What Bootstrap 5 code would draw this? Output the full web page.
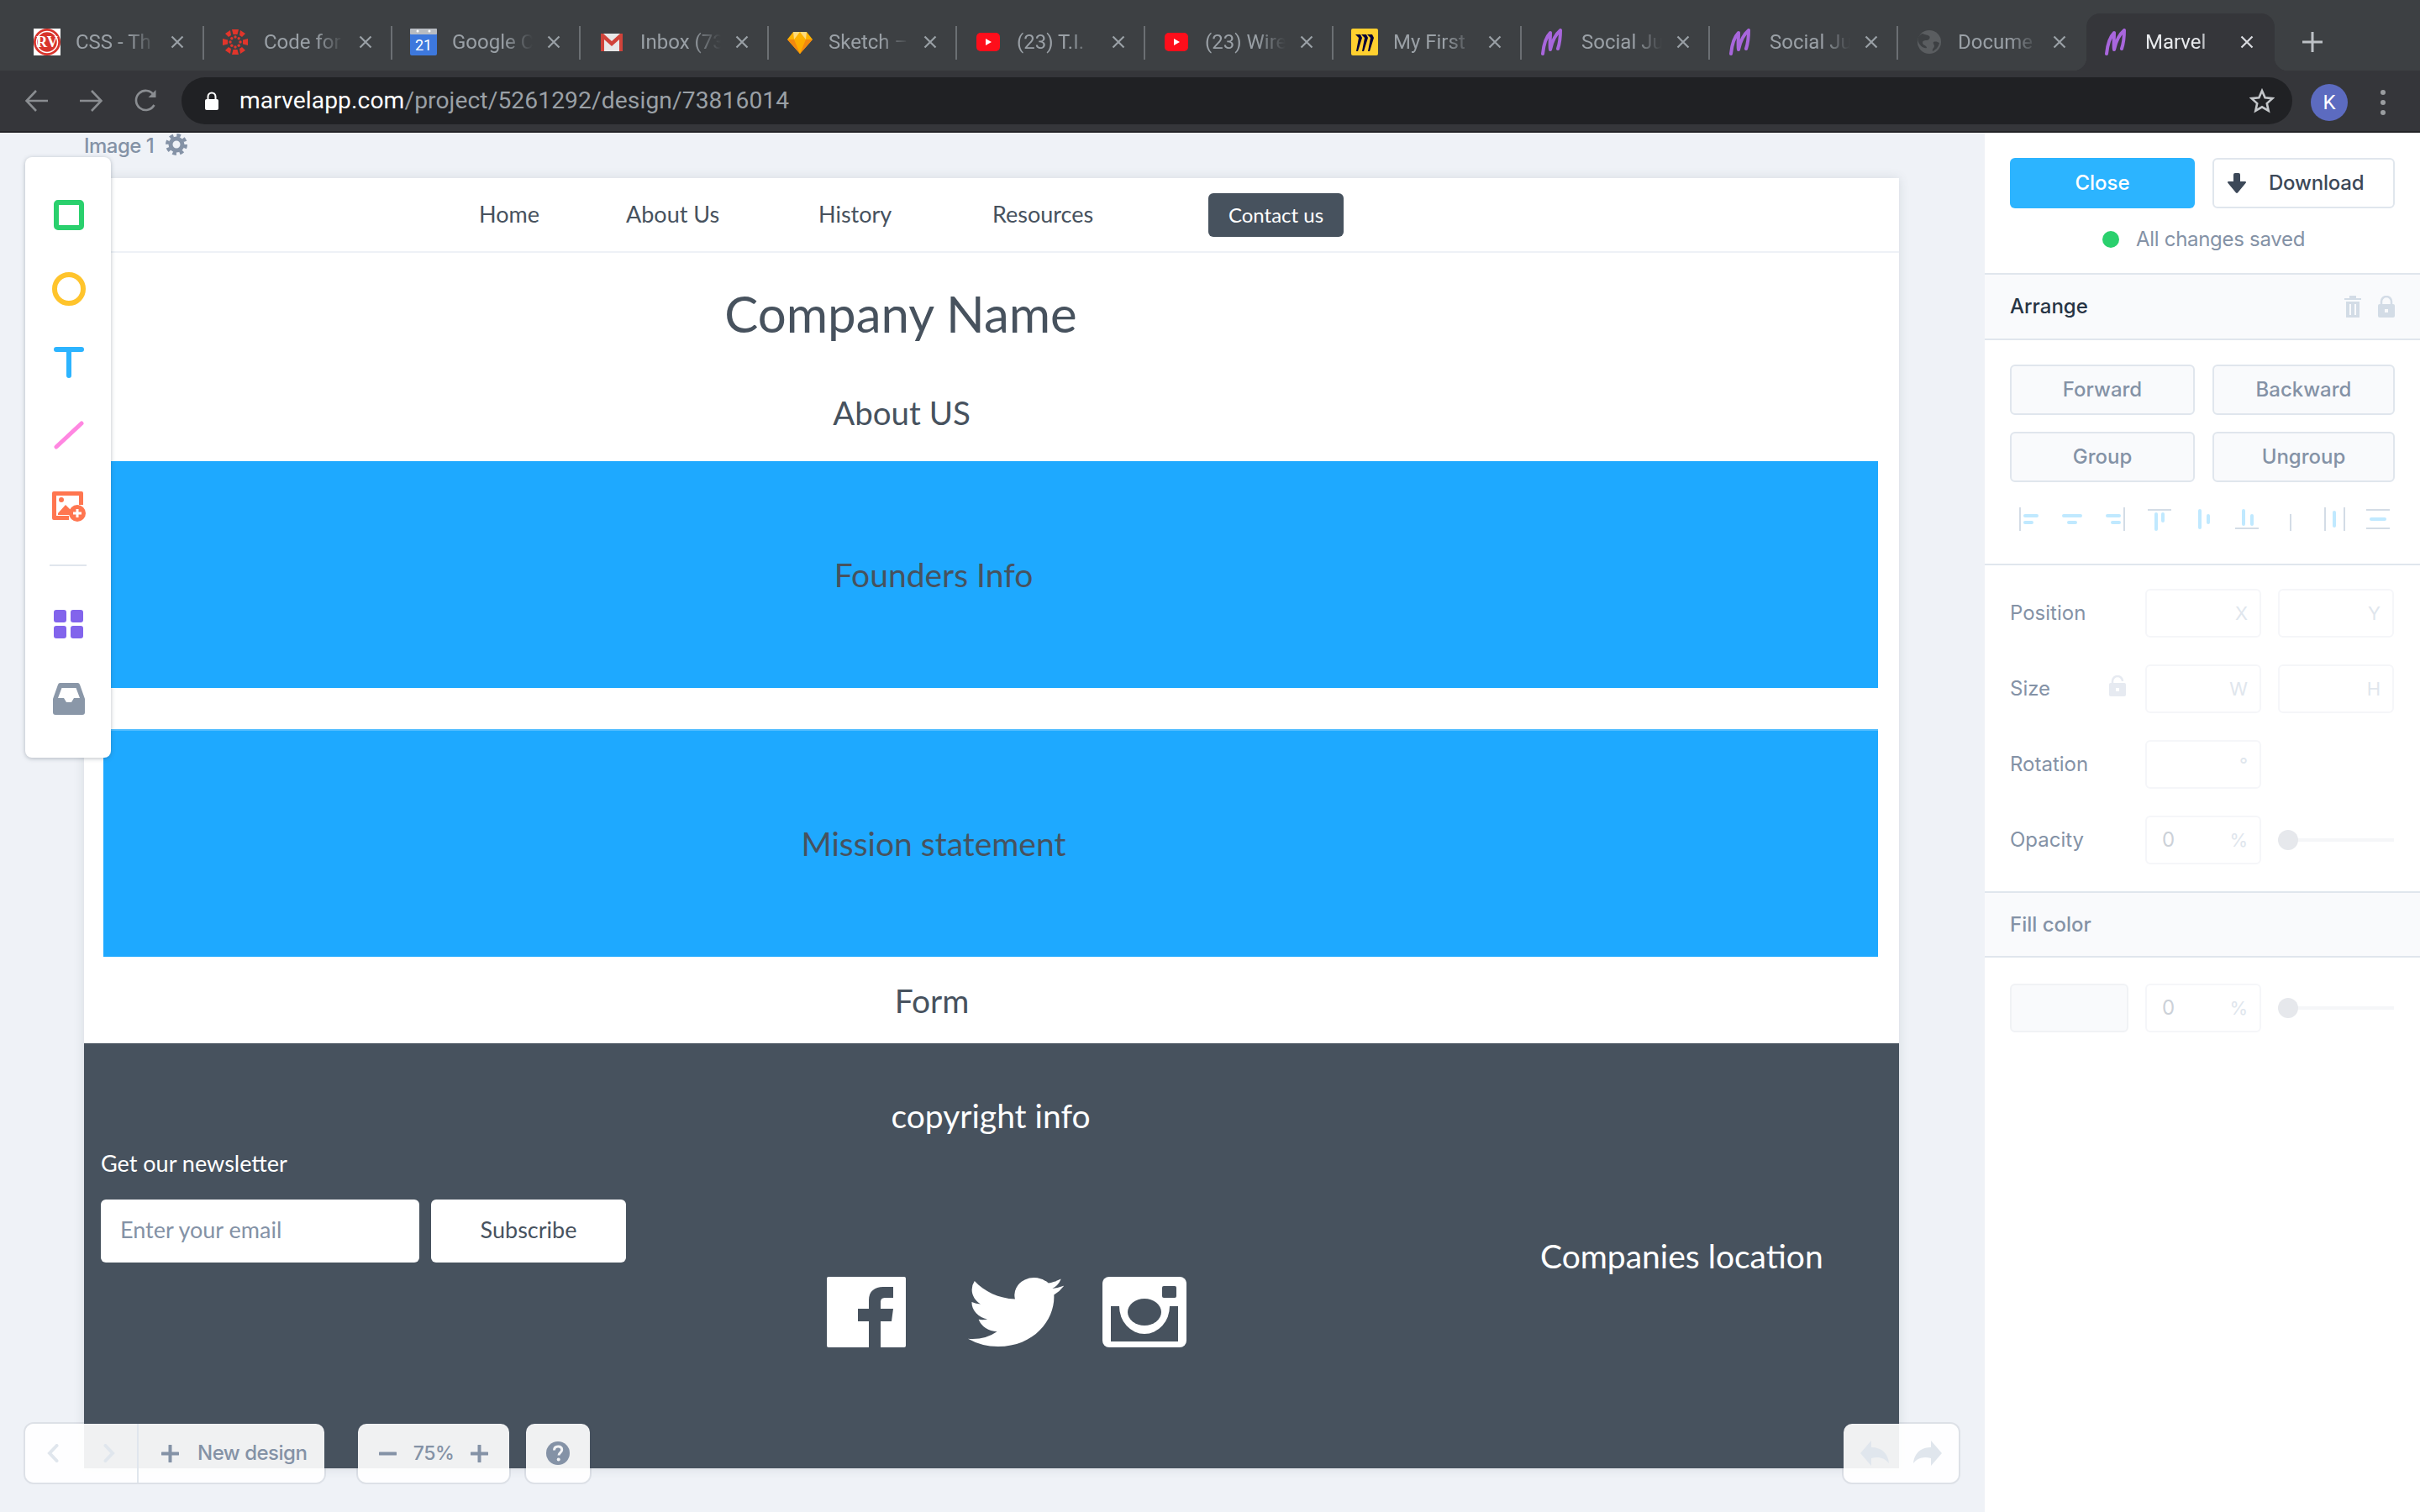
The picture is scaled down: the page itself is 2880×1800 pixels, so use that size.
<!DOCTYPE html>
<html lang="en">
<head>
<meta charset="utf-8">
<title>Marvel</title>
<link rel="stylesheet" href="https://cdn.jsdelivr.net/npm/bootstrap@5.3.0/dist/css/bootstrap.min.css">
<style>
html,body{height:1800px;width:2880px;overflow:hidden}
body{background:#eff2f7;font-family:"Inter","Liberation Sans",sans-serif;color:#47525e}
svg{display:block;flex:none}
/* browser chrome */
.tabstrip{height:84px;background:#3d4043;padding-left:20px;font-family:"Roboto","Liberation Sans",sans-serif}
.tabitem{width:224px;height:68px;position:relative;color:#9aa0a6;font-size:24px}
.tabitem.sep::after{content:"";position:absolute;right:1px;top:15px;height:40px;width:2px;background:#6b6f73}
.tabitem.on{background:#35363a;border-radius:16px 16px 0 0;color:#e8eaed;margin-left:-1px}
.tabitem.on::before,.tabitem.on .flareright{content:"";position:absolute;bottom:0;width:16px;height:16px}
.tabitem.on::before{left:-16px;background:radial-gradient(circle at 0 0,transparent 16px,#35363a 16.5px)}
.tabitem.on .flareright{right:-16px;background:radial-gradient(circle at 100% 0,transparent 16px,#35363a 16.5px)}
.favslot{width:70px;padding-left:20px}
.tabname{width:100px;overflow:hidden;white-space:nowrap;line-height:32px;-webkit-mask-image:linear-gradient(90deg,#000 62%,transparent 96%);mask-image:linear-gradient(90deg,#000 62%,transparent 96%)}
.tabshut{margin-left:13px}
.newtab{margin-left:33px;height:68px}
.toolstrip{height:74px;background:#35363a;border-bottom:2px solid #232427;padding-top:8px;position:relative}
.navglyphs{width:216px;height:56px;padding-left:30px;gap:38px}
.addressbar{width:2512px;height:56px;background:#202124;border-radius:28px;padding:0 21px 0 28px;font-family:"Roboto","Liberation Sans",sans-serif;font-size:28.2px}
.urlhost{color:#fff}.urlpath{color:#9aa0a6}
.urltext{margin-left:25px;line-height:56px;letter-spacing:.1px}
.useravatar{width:44px;height:44px;border-radius:50%;background:#5c6bc0;color:#fff;font:24px "Roboto",sans-serif;margin-left:22px}
.moredots{margin-left:38px}
/* app */
.appmain{height:1642px}
.workspace{position:relative;width:2362px;flex:none;overflow:hidden}
.imgcaption{height:54px;padding-left:100px;gap:14px;color:#8492a6;font-size:24px;font-weight:500;line-height:30px;letter-spacing:-.5px;padding-top:1px}
.artboard{margin-left:100px;width:2160px;height:1536px;background:#fff;box-shadow:0 0 12px rgba(71,82,94,.14);font-family:"Lato","Liberation Sans",sans-serif;color:#47525e}
.sitenav{height:89px;border-bottom:2px solid #eef1f7;padding-left:470px;display:grid;grid-template-columns:175px 229px 207px 257px 161px;align-items:center;font-size:27px}
.sitelink{color:#47525e;text-decoration:none}
.contactbtn{width:161px;height:52px;background:#47525e;color:#fff;border-radius:6px;font-size:24px;padding:0;border:0;display:flex;align-items:center;justify-content:center}
.heroblock{height:248px;padding-top:34px}
.sitetitle{font-size:60px;font-weight:400;width:1944px;text-align:center;margin:0;line-height:76px}
.aboutline{font-size:38.5px;font-weight:400;width:1946px;text-align:center;margin:56px 0 0;line-height:48px}
.bluepanel{margin-left:23px;width:2112px;height:270px;background:#1ea9ff;font-size:39px;padding-right:136px;color:#47525e}
.bluepanel.second{margin-top:49px;height:271px;border-top:2px solid #52bdff}
.formline{font-size:39px;font-weight:400;width:2018px;text-align:center;height:103px;line-height:104px;margin:0}
.sitefoot{height:506px;background:#47525e;color:#fff;position:relative}
.newsblock{width:645px;padding:121px 0 0 20px}
.newsblock p{font-size:27px;line-height:44px;margin:0 0 21px}
.newsrow{gap:14px}
.emailfield{width:379px;height:75px;border:0;border-radius:6px;font-size:27px;padding:0 23px 4px;font-family:inherit}
.emailfield::placeholder{color:#8492a6;opacity:1}
.subbtn{width:232px;height:75px;background:#fff;border:0;border-radius:6px;font-size:27px;color:#47525e;padding:0 0 3px}
.midblock{width:580px}
.copyline{font-size:39px;text-align:center;line-height:48px;margin:62px 0 0 89px;width:690px}
.sociallist{margin-top:168px;margin-left:239px}
.twbird{margin-left:74px}
.igglyph{margin-left:46px}
.placeblock{font-size:39px;margin:228px 0 0 508px;line-height:50px;white-space:nowrap}
/* floating */
.toolpalette{position:absolute;left:30px;top:29px;width:102px;height:715px;background:#fff;border-radius:8px;box-shadow:0 1px 5px rgba(60,72,88,.35);padding-top:51px}
.palslot{width:102px;display:flex;justify-content:center;padding-left:2px}
.mb-rect{margin-bottom:50px}
.mb-circle{margin-bottom:49px}
.mb-text{margin-bottom:51px}
.mb-line{margin-bottom:50px}
.mb-img{margin-bottom:51px}
.mb-grid{margin-top:52px;margin-bottom:53px}
.paldivider{width:44px;height:2px;background:#e0e6ed;margin:0 auto}
.floatgroup{height:70px;background:rgba(255,255,255,.92);border-radius:10px;box-shadow:0 0 0 2px rgba(71,82,94,.1);color:#8492a6;font-size:24px;font-weight:500;letter-spacing:-.5px}
.bottombar{position:absolute;left:30px;bottom:35px;gap:20px}
.undogroup{position:absolute;right:31px;bottom:35px;width:137px;padding:0 20px;justify-content:space-between}
.backfwd{width:135px;height:70px;border-right:2px solid #e0e6ed;padding:0 26px}
.newdesign{width:221px;padding-left:27px;gap:22px}
.zoomgroup{width:180px;margin-left:20px;padding:0 25px;justify-content:space-between;font-size:23px}
.helpgroup{width:76px;justify-content:center}
/* side panel */
.sidepanel{width:518px;background:#fff;flex:none;font-size:24px;color:#8492a6}
.panelinner{padding:30px 30px 0}
.btnpair{display:grid;grid-template-columns:220px 217px;gap:20px 21px}
.closebtn,.dlbtn,.softbtn{height:60px;border-radius:6px;font-size:24px;font-weight:500;padding:0;display:flex;align-items:center;justify-content:center;font-family:inherit}
.closebtn{background:#2cb4ff;color:#fff;border:0}
.dlbtn{background:#fff;border:2px solid #e0e6ed;color:#3c4858;justify-content:flex-start;padding-left:16px;gap:27px;letter-spacing:-.2px}
.softbtn{background:#f9fafc;border:2px solid #e0e6ed;color:#8492a6}
.savedline{height:77px;gap:20px;padding:0 0 4px 110px;letter-spacing:-.3px;white-space:nowrap}
.greendot{width:20px;height:20px;border-radius:50%;background:#2ad06d}
.panelhead{height:80px;background:#f9fafc;border-top:2px solid #e0e6ed;border-bottom:2px solid #e0e6ed;padding:0 30px;font-weight:500;color:#273444;justify-content:space-between}
.panelhead.dim{color:#8492a6;height:79px}
.headicons{gap:20px}
.arrangebody{height:266px;padding:29px 30px 0}
.alignrow{gap:24px;margin:30px 0 0 8px}
.propsbody{height:390px;padding:28px 30px 0;border-top:2px solid #e0e6ed}
.proprow{height:58px;margin-bottom:32px;gap:20px}
.proplabel{width:141px;flex:none;display:flex;justify-content:space-between;align-items:center;padding-right:3px}
.lockglyph{margin-bottom:8px}
.propbox{width:138px;height:58px;border:2px solid #f5f6f9;border-radius:6px;display:flex;align-items:center;justify-content:space-between;padding:0 14px 0 18px;color:#e0e6ed;font-size:22px;flex:none}
.propbox .zeroval{color:#ccd1d8;font-size:24px}
.propbox .unitend{margin-left:auto}
.slidertrack{width:138px;height:4px;background:#f5f6f8;position:relative;flex:none}
.sliderthumb{position:absolute;left:0;top:-10px;width:24px;height:24px;border-radius:50%;background:#e6e8ec}
.swatchbox{width:141px;height:58px;flex:none;background:#f9fafc;border:2px solid #f0f2f5;border-radius:6px}
.fillbody{padding:31px 30px 0}
</style>
</head>
<body>
<header>
  <div class="tabstrip d-flex align-items-end">
    <div class="tabitem sep d-flex align-items-center"><div class="favslot"><svg width="32" height="32" viewBox="0 0 32 32"><rect width="32" height="32" fill="#fff"/><circle cx="16" cy="16" r="16" fill="#d8342c"/><circle cx="16" cy="16" r="12.5" fill="none" stroke="#fff" stroke-width="1.5"/><text x="16" y="22" text-anchor="middle" font-family="Liberation Serif" font-weight="700" font-size="18" fill="#fff">RV</text></svg></div><div class="tabname">CSS - Th</div><svg class="tabshut" width="16" height="16" viewBox="0 0 16 16"><path d="M1.5 1.5l13 13M14.500 1.500l-13 13" stroke="#9aa0a6" stroke-width="2.200"/></svg></div>
    <div class="tabitem sep d-flex align-items-center"><div class="favslot"><svg width="32" height="32" viewBox="0 0 32 32" fill="#e1352b"><path d="M12 1h8l-1.500 6h-5zM12 31h8l-1.500-6h-5zM1 12v8l6-1.500v-5zM31 12v8l-6-1.500v-5zM4 6l6-4 1 6-3 2zM28 6l-6-4-1 6 3 2zM4 26l6 4 1-6-3-2zM28 26l-6 4-1-6 3-2z"/><circle cx="16" cy="10" r="1.700"/><circle cx="16" cy="22" r="1.700"/><circle cx="10" cy="16" r="1.700"/><circle cx="22" cy="16" r="1.700"/><circle cx="11.800" cy="11.800" r="1.700"/><circle cx="20.200" cy="11.800" r="1.700"/><circle cx="11.800" cy="20.200" r="1.700"/><circle cx="20.200" cy="20.200" r="1.700"/></svg></div><div class="tabname">Code for</div><svg class="tabshut" width="16" height="16" viewBox="0 0 16 16"><path d="M1.5 1.5l13 13M14.500 1.500l-13 13" stroke="#9aa0a6" stroke-width="2.200"/></svg></div>
    <div class="tabitem sep d-flex align-items-center"><div class="favslot"><svg width="32" height="32" viewBox="0 0 32 32"><rect width="32" height="32" rx="2" fill="#3d78dd"/><rect width="32" height="7" rx="1" fill="#b8bcc2"/><circle cx="9" cy="3" r="1.500" fill="#fff"/><circle cx="23" cy="3" r="1.500" fill="#fff"/><text x="16" y="26" text-anchor="middle" font-family="Roboto" font-size="18" fill="#fff">21</text></svg></div><div class="tabname">Google C</div><svg class="tabshut" width="16" height="16" viewBox="0 0 16 16"><path d="M1.5 1.5l13 13M14.500 1.500l-13 13" stroke="#9aa0a6" stroke-width="2.200"/></svg></div>
    <div class="tabitem sep d-flex align-items-center"><div class="favslot"><svg width="32" height="32" viewBox="0 0 32 32"><rect x="3" y="6" width="26" height="21" fill="#e8e8e8"/><path d="M3 27V6h3l10 9 10-9h3v21h-4V13l-9 8-9-8v14z" fill="#d0433a"/></svg></div><div class="tabname">Inbox (73</div><svg class="tabshut" width="16" height="16" viewBox="0 0 16 16"><path d="M1.5 1.5l13 13M14.500 1.500l-13 13" stroke="#9aa0a6" stroke-width="2.200"/></svg></div>
    <div class="tabitem sep d-flex align-items-center"><div class="favslot"><svg width="32" height="32" viewBox="0 0 32 32"><path d="M8 4h16l7 9-15 17L1 13z" fill="#fdb300"/><path d="M1 13h30L16 30z" fill="#f2880f"/><path d="M9 13h14l-7 17z" fill="#fdad00"/><path d="M8 4l8 0-7 9zM24 4h-8l7 9z" fill="#fedb7b"/></svg></div><div class="tabname">Sketch –</div><svg class="tabshut" width="16" height="16" viewBox="0 0 16 16"><path d="M1.5 1.5l13 13M14.500 1.500l-13 13" stroke="#9aa0a6" stroke-width="2.200"/></svg></div>
    <div class="tabitem sep d-flex align-items-center"><div class="favslot"><svg width="32" height="32" viewBox="0 0 32 32"><rect x="2" y="5" width="28" height="22" rx="5" fill="#fe0e1b"/><path d="M13 12l7 4-7 4z" fill="#fff"/></svg></div><div class="tabname">(23) T.I.</div><svg class="tabshut" width="16" height="16" viewBox="0 0 16 16"><path d="M1.5 1.5l13 13M14.500 1.500l-13 13" stroke="#9aa0a6" stroke-width="2.200"/></svg></div>
    <div class="tabitem sep d-flex align-items-center"><div class="favslot"><svg width="32" height="32" viewBox="0 0 32 32"><rect x="2" y="5" width="28" height="22" rx="5" fill="#fe0e1b"/><path d="M13 12l7 4-7 4z" fill="#fff"/></svg></div><div class="tabname">(23) Wire</div><svg class="tabshut" width="16" height="16" viewBox="0 0 16 16"><path d="M1.5 1.5l13 13M14.500 1.500l-13 13" stroke="#9aa0a6" stroke-width="2.200"/></svg></div>
    <div class="tabitem sep d-flex align-items-center"><div class="favslot"><svg width="32" height="32" viewBox="0 0 32 32"><rect width="32" height="32" rx="2" fill="#ffd02f"/><path d="M5 7h6l2 4-5 16h-2l3-16zM12 7h6l2 4-5 16h-2l3-16zM19 7h6l2 4-5 16h-2l3-16z" fill="#050038"/></svg></div><div class="tabname">My First</div><svg class="tabshut" width="16" height="16" viewBox="0 0 16 16"><path d="M1.5 1.5l13 13M14.500 1.500l-13 13" stroke="#9aa0a6" stroke-width="2.200"/></svg></div>
    <div class="tabitem sep d-flex align-items-center"><div class="favslot"><svg width="32" height="32" viewBox="0 0 32 32" fill="none"><path d="M4 30C5 20 8 10 13 5c0 7-1 15 0 20C15 16 19 7 25 2c0 8-1 16-3 22" stroke="#a866dc" stroke-width="4" stroke-linecap="round" stroke-linejoin="round"/></svg></div><div class="tabname">Social Ju</div><svg class="tabshut" width="16" height="16" viewBox="0 0 16 16"><path d="M1.5 1.5l13 13M14.500 1.500l-13 13" stroke="#9aa0a6" stroke-width="2.200"/></svg></div>
    <div class="tabitem sep d-flex align-items-center"><div class="favslot"><svg width="32" height="32" viewBox="0 0 32 32" fill="none"><path d="M4 30C5 20 8 10 13 5c0 7-1 15 0 20C15 16 19 7 25 2c0 8-1 16-3 22" stroke="#a866dc" stroke-width="4" stroke-linecap="round" stroke-linejoin="round"/></svg></div><div class="tabname">Social Ju</div><svg class="tabshut" width="16" height="16" viewBox="0 0 16 16"><path d="M1.5 1.5l13 13M14.500 1.500l-13 13" stroke="#9aa0a6" stroke-width="2.200"/></svg></div>
    <div class="tabitem d-flex align-items-center"><div class="favslot"><svg width="32" height="32" viewBox="0 0 32 32"><circle cx="16" cy="16" r="14" fill="#5a5d60"/><path d="M8 6c3 2 6 1 8 3s-1 5-3 5-5 0-5 3 5 3 5 6c-3 1-8-2-10-7s1-8 5-10zM21 16c3-1 5 0 7 1-1 5-4 8-8 10-1-3 2-4 2-6s-2-3-1-5z" fill="#3d4043"/></svg></div><div class="tabname">Docume</div><svg class="tabshut" width="16" height="16" viewBox="0 0 16 16"><path d="M1.5 1.5l13 13M14.500 1.500l-13 13" stroke="#9aa0a6" stroke-width="2.200"/></svg></div>
    <div class="tabitem on d-flex align-items-center"><div class="favslot"><svg width="32" height="32" viewBox="0 0 32 32" fill="none"><path d="M4 30C5 20 8 10 13 5c0 7-1 15 0 20C15 16 19 7 25 2c0 8-1 16-3 22" stroke="#a866dc" stroke-width="4" stroke-linecap="round" stroke-linejoin="round"/></svg></div><div class="tabname">Marvel</div><svg class="tabshut" width="16" height="16" viewBox="0 0 16 16"><path d="M1.5 1.5l13 13M14.500 1.500l-13 13" stroke="#dadce0" stroke-width="2.200"/></svg><span class="flareright"></span></div>
    <div class="newtab d-flex align-items-center"><svg width="24" height="24" viewBox="0 0 24 24"><path d="M12 0v24M0 12h24" stroke="#bdc1c6" stroke-width="3"/></svg></div>
  </div>
  <div class="toolstrip d-flex">
    <div class="navglyphs d-flex align-items-center">
      <svg width="27" height="26" viewBox="0 0 27 26" fill="none"><path d="M27 13H2M13 1L1.500 13 13 25" stroke="#8a8d91" stroke-width="2.600"/></svg>
      <svg width="27" height="26" viewBox="0 0 27 26" fill="none"><path d="M0 13h25M14 1l11.500 12L14 25" stroke="#8a8d91" stroke-width="2.600"/></svg>
      <svg width="28" height="28" viewBox="0 0 28 28" fill="none"><path d="M23.500 19A11.500 11.500 0 1 1 23 7" stroke="#8a8d91" stroke-width="2.600"/><path d="M25.500 1v9h-9z" fill="#8a8d91"/></svg>
    </div>
    <div class="addressbar d-flex align-items-center">
      <svg width="16" height="22" viewBox="0 0 16 22" fill="none"><rect y="9" width="16" height="13" rx="2" fill="#fff"/><path d="M3.500 10V6a4.500 4.500 0 0 1 9 0v4" stroke="#fff" stroke-width="2"/></svg>
      <div class="urltext"><span class="urlhost">marvelapp.com</span><span class="urlpath">/project/5261292/design/73816014</span></div>
      <svg class="ms-auto" width="30" height="30" viewBox="0 0 30 30" fill="none"><path d="M15 3l3.600 8.200 8.900.9-6.700 6 1.900 8.800L15 22.300 7.300 26.900l1.900-8.800-6.700-6 8.900-.9z" stroke="#c4c7ca" stroke-width="2.600"/></svg>
    </div>
    <div class="useravatar d-flex align-items-center justify-content-center align-self-center mb-1">K</div>
    <svg class="moredots align-self-center mb-1" width="8" height="32" viewBox="0 0 8 32" fill="#9a9da0"><circle cx="4" cy="4" r="3"/><circle cx="4" cy="16" r="3"/><circle cx="4" cy="28" r="3"/></svg>
  </div>
</header>
<main class="appmain d-flex">
  <section class="workspace">
    <div class="imgcaption d-flex align-items-start">
      <span>Image 1</span>
      <svg width="26" height="26" viewBox="0 0 26 26" fill="none"><circle cx="13" cy="13" r="7" stroke="#8492a6" stroke-width="5"/><circle cx="13" cy="13" r="11" stroke="#8492a6" stroke-width="4" stroke-dasharray="4.600 4.040"/></svg>
    </div>
    <article class="artboard">
      <nav class="sitenav">
        <a class="sitelink" href="#">Home</a>
        <a class="sitelink" href="#">About Us</a>
        <a class="sitelink" href="#">History</a>
        <a class="sitelink" href="#">Resources</a>
        <button class="contactbtn btn" type="button">Contact us</button>
      </nav>
      <div class="heroblock">
        <h1 class="sitetitle">Company Name</h1>
        <h2 class="aboutline">About US</h2>
      </div>
      <div class="bluepanel d-flex align-items-center justify-content-center">Founders Info</div>
      <div class="bluepanel second d-flex align-items-center justify-content-center">Mission statement</div>
      <h2 class="formline">Form</h2>
      <footer class="sitefoot d-flex">
        <div class="newsblock">
          <p>Get our newsletter</p>
          <div class="newsrow d-flex">
            <input class="emailfield form-control" type="text" placeholder="Enter your email">
            <button class="subbtn btn" type="button">Subscribe</button>
          </div>
        </div>
        <div class="midblock">
          <p class="copyline">copyright info</p>
          <div class="sociallist d-flex">
            <svg width="94" height="84" viewBox="0 0 94 84"><rect width="94" height="84" rx="2" fill="#fff"/><path d="M50 84V53H37V38h13V28c0-11 7-16 17-16h12v13h-9c-5 0-6 2-6 6v7h15l-2 15H64v31z" fill="#47525e"/></svg>
            <svg class="twbird" width="114" height="84" viewBox="0 2 24 20" preserveAspectRatio="none"><path fill="#fff" d="M23.953 4.570a10 10 0 0 1-2.825.775 4.958 4.958 0 0 0 2.163-2.723c-.951.555-2.005.959-3.127 1.184a4.920 4.920 0 0 0-8.384 4.482C7.690 8.095 4.067 6.130 1.640 3.162a4.822 4.822 0 0 0-.666 2.475c0 1.710.870 3.213 2.188 4.096a4.904 4.904 0 0 1-2.228-.616v.060a4.923 4.923 0 0 0 3.946 4.827 4.996 4.996 0 0 1-2.212.085 4.936 4.936 0 0 0 4.604 3.417 9.867 9.867 0 0 1-6.102 2.105c-.390 0-.779-.023-1.170-.067a13.995 13.995 0 0 0 7.557 2.209c9.053 0 13.998-7.496 13.998-13.985 0-.210 0-.420-.015-.630A9.935 9.935 0 0 0 24 4.590z"/></svg>
            <svg class="igglyph" width="100" height="84" viewBox="0 0 100 84"><rect width="100" height="84" rx="8" fill="#fff"/><rect x="71" y="11" width="17" height="14" rx="2" fill="#47525e"/><path d="M10 35h10a30 33 0 1 0 60 0h10v42H10z" fill="#47525e"/><ellipse cx="50" cy="42" rx="20" ry="16" fill="#47525e"/></svg>
          </div>
        </div>
        <div class="placeblock">Companies location</div>
      </footer>
    </article>
    <aside class="toolpalette">
      <div class="palslot mb-rect"><svg width="36" height="36" viewBox="0 0 36 36"><rect x="3" y="3" width="30" height="30" rx="2" fill="none" stroke="#2ad06d" stroke-width="6"/></svg></div>
      <div class="palslot mb-circle"><svg width="40" height="40" viewBox="0 0 40 40"><circle cx="20" cy="20" r="17" fill="none" stroke="#ffc42c" stroke-width="6"/></svg></div>
      <div class="palslot mb-text"><svg width="36" height="37" viewBox="0 0 36 37"><path d="M3 3h30M18 3v31" stroke="#2cb4ff" stroke-width="6" stroke-linecap="round"/></svg></div>
      <div class="palslot mb-line"><svg width="36" height="34" viewBox="0 0 36 34"><path d="M3 31L33 3" stroke="#ff87e1" stroke-width="5" stroke-linecap="round"/></svg></div>
      <div class="palslot mb-img"><svg width="40" height="36" viewBox="0 0 40 36" fill="#ff7650"><path d="M2 0h33a2 2 0 0 1 2 2v14h-5V5H5v24h15v5H2a2 2 0 0 1-2-2V2a2 2 0 0 1 2-2z"/><circle cx="11" cy="10" r="3"/><path d="M7 26l9-10 8 8-3 4H7z"/><circle cx="30" cy="26" r="10"/><path d="M30 21v10M25 26h10" stroke="#fff" stroke-width="3"/></svg></div>
      <div class="paldivider"></div>
      <div class="palslot mb-grid"><svg width="36" height="34" viewBox="0 0 36 34" fill="#8264ec"><rect width="15" height="15" rx="3"/><rect x="20" width="15" height="15" rx="3"/><rect y="19" width="15" height="15" rx="3"/><rect x="20" y="19" width="15" height="15" rx="3"/></svg></div>
      <div class="palslot"><svg width="38" height="38" viewBox="0 0 38 38" fill="#8a97a8"><path d="M9 0h20a3 3 0 0 1 3 2l6 17v16a3 3 0 0 1-3 3H3a3 3 0 0 1-3-3V19L6 2a3 3 0 0 1 3-2zm1.500 6L6 18h7l3 5h6l3-5h7L27.500 6z" fill-rule="evenodd"/></svg></div>
    </aside>
    <div class="bottombar d-flex">
      <div class="floatgroup d-flex align-items-center">
        <div class="backfwd d-flex align-items-center justify-content-between">
          <svg width="14" height="22" viewBox="0 0 14 22" fill="none"><path d="M11.500 2L3 11l8.500 9" stroke="#e0e6ed" stroke-width="4" stroke-linecap="round"/></svg>
          <svg width="14" height="22" viewBox="0 0 14 22" fill="none"><path d="M2.500 2L11 11l-8.500 9" stroke="#e0e6ed" stroke-width="4" stroke-linecap="round"/></svg>
        </div>
        <div class="newdesign d-flex align-items-center">
          <svg width="21" height="21" viewBox="0 0 21 21"><path d="M10.500 1v19M1 10.500h19" stroke="#8492a6" stroke-width="4" stroke-linecap="round"/></svg>
          <span>New design</span>
        </div>
      </div>
      <div class="floatgroup zoomgroup d-flex align-items-center">
        <svg width="21" height="21" viewBox="0 0 21 21"><path d="M1 10.500h19" stroke="#8492a6" stroke-width="4" stroke-linecap="round"/></svg>
        <span>75%</span>
        <svg width="21" height="21" viewBox="0 0 21 21"><path d="M10.500 1v19M1 10.500h19" stroke="#8492a6" stroke-width="4" stroke-linecap="round"/></svg>
      </div>
      <div class="floatgroup helpgroup d-flex align-items-center">
        <svg width="28" height="28" viewBox="0 0 28 28"><circle cx="14" cy="14" r="14" fill="#8492a6"/><path d="M9.500 10.500c0-3 2-4.500 4.700-4.500s4.500 1.600 4.500 4c0 3.500-3.700 3.300-3.700 6.500" fill="none" stroke="#f2f3f5" stroke-width="3"/><circle cx="14.700" cy="21.500" r="2" fill="#f2f3f5"/></svg>
      </div>
    </div>
    <div class="floatgroup undogroup d-flex align-items-center">
      <svg width="34" height="30" viewBox="0 0 34 30" fill="#e0e6ed"><path d="M13 0L0 15l13 15v-9c8-2 15-1 21 6-1-11-8-19-21-19z"/></svg>
      <svg width="34" height="30" viewBox="0 0 34 30" fill="#e0e6ed"><path d="M21 0l13 15-13 15v-9c-8-2-15-1-21 6C1 16 8 8 21 8z"/></svg>
    </div>
  </section>
  <aside class="sidepanel">
    <div class="panelinner">
      <div class="btnpair">
        <button class="btn closebtn" type="button">Close</button>
        <button class="btn dlbtn" type="button"><svg width="22" height="24" viewBox="0 0 22 24" fill="#3c4858"><path d="M7 2a2 2 0 0 1 2-2h4a2 2 0 0 1 2 2v8h6a1 1 0 0 1 .7 1.700L12 23.500a1.500 1.500 0 0 1-2 0L.3 11.700A1 1 0 0 1 1 10h6z"/></svg>Download</button>
      </div>
      <div class="savedline d-flex align-items-center"><span class="greendot"></span><span>All changes saved</span></div>
    </div>
    <div class="panelhead d-flex align-items-center">
      <span>Arrange</span>
      <div class="headicons d-flex align-items-center">
        <svg width="20" height="26" viewBox="0 0 20 26" fill="#d3dce6"><path d="M6 0h8v3h6v2H0V3h6zM2 7h16v19H2zm4 3v13h2V10zm6 0v13h2V10z" fill-rule="evenodd"/></svg>
        <svg width="20" height="26" viewBox="0 0 20 26" fill="none"><rect y="10" width="20" height="16" rx="2" fill="#d3dce6"/><rect x="8" y="16" width="4" height="4" fill="#f9fafc"/><path d="M4 11V7a6 6 0 0 1 12 0v4" stroke="#d3dce6" stroke-width="2.500"/></svg>
      </div>
    </div>
    <div class="arrangebody">
      <div class="btnpair">
        <button class="btn softbtn" type="button">Forward</button>
        <button class="btn softbtn" type="button">Backward</button>
        <button class="btn softbtn" type="button">Group</button>
        <button class="btn softbtn" type="button">Ungroup</button>
      </div>
      <div class="alignrow d-flex">
        <svg width="28" height="28" viewBox="0 0 28 28"><rect x="3" width="2" height="28" fill="#d3dce6"/><rect x="8" y="8" width="18" height="4" rx="2" fill="#c0e9ff"/><rect x="8" y="16" width="12" height="4" rx="2" fill="#c0e9ff"/></svg>
        <svg width="28" height="28" viewBox="0 0 28 28" fill="#c0e9ff"><rect x="2" y="8" width="24" height="4" rx="2"/><rect x="8" y="16" width="12" height="4" rx="2"/></svg>
        <svg width="28" height="28" viewBox="0 0 28 28"><rect x="23" width="2" height="28" fill="#d3dce6"/><rect x="2" y="8" width="18" height="4" rx="2" fill="#c0e9ff"/><rect x="8" y="16" width="12" height="4" rx="2" fill="#c0e9ff"/></svg>
        <svg width="28" height="28" viewBox="0 0 28 28"><rect y="2" width="28" height="2" fill="#d3dce6"/><rect x="8" y="6" width="4" height="22" rx="2" fill="#c0e9ff"/><rect x="16" y="6" width="4" height="12" rx="2" fill="#c0e9ff"/></svg>
        <svg width="28" height="28" viewBox="0 0 28 28" fill="#c0e9ff"><rect x="8" y="2" width="4" height="24" rx="2"/><rect x="18" y="8" width="4" height="12" rx="2"/></svg>
        <svg width="28" height="28" viewBox="0 0 28 28"><rect y="24" width="28" height="2" fill="#d3dce6"/><rect x="8" y="2" width="4" height="20" rx="2" fill="#c0e9ff"/><rect x="18" y="8" width="4" height="14" rx="2" fill="#c0e9ff"/></svg>
        <svg width="28" height="28" viewBox="0 0 28 28"><rect x="13" y="8" width="2" height="20" fill="#d3dce6"/></svg>
        <svg width="28" height="28" viewBox="0 0 28 28"><rect x="2" width="2" height="28" fill="#d3dce6"/><rect x="25" width="2" height="28" fill="#d3dce6"/><rect x="12" y="4" width="4" height="20" rx="2" fill="#c0e9ff"/></svg>
        <svg width="28" height="28" viewBox="0 0 28 28"><rect y="2" width="28" height="2" fill="#d3dce6"/><rect y="24" width="28" height="2" fill="#d3dce6"/><rect x="4" y="12" width="20" height="4" rx="2" fill="#c0e9ff"/></svg>
      </div>
    </div>
    <div class="propsbody">
      <div class="proprow d-flex align-items-center"><div class="proplabel">Position</div><div class="propbox"><span class="unitend">X</span></div><div class="propbox"><span class="unitend">Y</span></div></div>
      <div class="proprow d-flex align-items-center"><div class="proplabel">Size<svg class="lockglyph" width="20" height="25" viewBox="0 0 20 25" fill="none"><rect y="9" width="20" height="16" rx="2" fill="#e6eaf1"/><rect x="8" y="15" width="4" height="4" fill="#fff"/><path d="M4 10V7a6 6 0 0 1 12 0" stroke="#e6eaf1" stroke-width="2.500"/></svg></div><div class="propbox"><span class="unitend">W</span></div><div class="propbox"><span class="unitend">H</span></div></div>
      <div class="proprow d-flex align-items-center"><div class="proplabel">Rotation</div><div class="propbox"><span class="unitend">°</span></div></div>
      <div class="proprow d-flex align-items-center"><div class="proplabel">Opacity</div><div class="propbox"><span class="zeroval">0</span><span class="unitend">%</span></div><div class="slidertrack"><span class="sliderthumb"></span></div></div>
    </div>
    <div class="panelhead dim d-flex align-items-center"><span>Fill color</span></div>
    <div class="fillbody">
      <div class="proprow d-flex align-items-center"><div class="swatchbox"></div><div class="propbox"><span class="zeroval">0</span><span class="unitend">%</span></div><div class="slidertrack"><span class="sliderthumb"></span></div></div>
    </div>
  </aside>
</main>
<script src="https://cdn.jsdelivr.net/npm/bootstrap@5.3.0/dist/js/bootstrap.bundle.min.js"></script>
</body>
</html>
